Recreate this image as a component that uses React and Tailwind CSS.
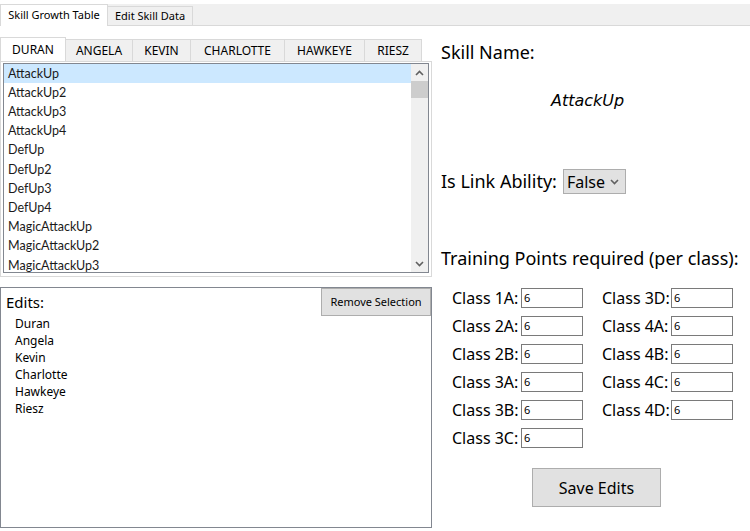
import { useState } from 'react';

const heroes = ['DURAN', 'ANGELA', 'KEVIN', 'CHARLOTTE', 'HAWKEYE', 'RIESZ'];
const heroWidths = ['w-[66px]', 'w-[67px]', 'w-[58px]', 'w-[94px]', 'w-[80px]', 'w-[57px]'];

const skills = [
  'AttackUp',
  'AttackUp2',
  'AttackUp3',
  'AttackUp4',
  'DefUp',
  'DefUp2',
  'DefUp3',
  'DefUp4',
  'MagicAttackUp',
  'MagicAttackUp2',
  'MagicAttackUp3'
];

const edits = ['Duran', 'Angela', 'Kevin', 'Charlotte', 'Hawkeye', 'Riesz'];

const leftClasses = ['1A', '2A', '2B', '3A', '3B', '3C'];
const rightClasses = ['3D', '4A', '4B', '4C', '4D'];

function Chevron({ up }) {
  return (
    <svg width="9" height="6" viewBox="0 0 9 6" aria-hidden="true">
      <path
        d={up ? 'M1 5 L4.5 1.5 L8 5' : 'M1 1 L4.5 4.5 L8 1'}
        fill="none"
        stroke="#606060"
        strokeWidth="1.6"
      />
    </svg>
  );
}

function ClassField({ name }) {
  return (
    <div className="flex h-[28px] items-center">
      <span className="w-[69px] text-[16px] text-black">Class {name}:</span>
      <div className="flex h-[20px] w-[62px] items-center border border-[#7a7a7a] bg-white pl-[2px] text-[11px] text-black">
        6
      </div>
    </div>
  );
}

export default function App() {
  const [selected, setSelected] = useState(0);

  return (
    <div
      className="h-[531px] w-[750px] overflow-hidden bg-white text-black"
      style={{ fontFamily: '"Noto Sans", "Open Sans", sans-serif' }}
    >
      <div className="h-[4px]" />

      <div className="flex h-[22px] items-end border-b border-[#d9d9d9] bg-[#f0f0f0]">
        <div className="-mb-px flex h-[22px] w-[108px] items-center justify-center border border-b-0 border-[#d9d9d9] bg-white text-[11px]">
          Skill Growth Table
        </div>
        <div className="flex h-[19px] w-[85px] items-center justify-center border border-b-0 border-l-0 border-[#d9d9d9] text-[11px]">
          Edit Skill Data
        </div>
      </div>

      <div className="flex">
        <div className="flex w-[432px] flex-col pt-[11px]">
          <div className="flex h-[24px] items-end">
            {heroes.map((hero, index) => (
              <div
                key={hero}
                className={
                  index === 0
                    ? `-mb-px flex h-[25px] ${heroWidths[index]} items-center justify-center border border-b-0 border-[#d9d9d9] bg-white text-[12px]`
                    : `flex h-[22px] ${heroWidths[index]} items-center justify-center border border-b-0 border-l-0 border-[#d9d9d9] bg-[#f0f0f0] text-[12px]`
                }
              >
                {hero}
              </div>
            ))}
          </div>

          <div className="h-[216px] border border-[#d9d9d9] px-[2px] pt-[1px]">
            <div className="flex h-[210px] border border-[#828790] bg-white">
              <ul
                className="flex-1 overflow-hidden text-[12.5px]"
                style={{ fontFamily: 'Lato, "Noto Sans", sans-serif' }}
              >
                {skills.map((skill, index) => (
                  <li
                    key={skill}
                    onClick={() => setSelected(index)}
                    className={`flex h-[19.2px] items-center pl-[4px] pt-[1px] text-[#1a1a1a] ${
                      index === selected ? 'bg-[#cce8ff]' : ''
                    }`}
                  >
                    {skill}
                  </li>
                ))}
              </ul>
              <div className="flex w-[17px] flex-col bg-[#f0f0f0]">
                <div className="flex h-[17px] items-center justify-center">
                  <Chevron up />
                </div>
                <div className="h-[17px] bg-[#cdcdcd]" />
                <div className="flex-1" />
                <div className="flex h-[17px] items-center justify-center">
                  <Chevron />
                </div>
              </div>
            </div>
          </div>

          <div className="mt-[10px] flex h-[241px] flex-col border border-[#828790]">
            <div className="flex items-start justify-between">
              <span className="pl-[5px] pt-[3px] text-[15px]">Edits:</span>
              <button className="h-[28px] w-[110px] border border-[#adadad] bg-[#e1e1e1] text-[11px]">
                Remove Selection
              </button>
            </div>
            <ul className="mt-[-1px] pl-[14px] text-[12px]">
              {edits.map((name) => (
                <li key={name} className="h-[17px] leading-[17px]">
                  {name}
                </li>
              ))}
            </ul>
          </div>
        </div>

        <div className="flex flex-1 flex-col pl-[9px]">
          <div className="pt-[14px] text-[18px] leading-[24px]">Skill Name:</div>
          <div
            className="mt-[25px] pl-[110px] text-[16px] italic"
            style={{ fontFamily: '"DejaVu Sans", sans-serif' }}
          >
            {skills[selected]}
          </div>

          <div className="mt-[55px] flex items-center">
            <span className="text-[18px]">Is Link Ability:</span>
            <div className="ml-[6px] flex h-[25px] w-[63px] items-center justify-between border border-[#adadad] bg-[#e1e1e1] pl-[3px] pr-[6px] text-[16px]">
              False
              <Chevron />
            </div>
          </div>

          <div className="mt-[51px] text-[18px] leading-[24px]">
            Training Points required (per class):
          </div>

          <div className="mt-[14px] flex gap-[19px] pl-[11px]">
            <div className="flex flex-col">
              {leftClasses.map((name) => (
                <ClassField key={name} name={name} />
              ))}
            </div>
            <div className="flex flex-col">
              {rightClasses.map((name) => (
                <ClassField key={name} name={name} />
              ))}
            </div>
          </div>

          <div className="mt-[16px] flex pl-[91px]">
            <button className="h-[39px] w-[129px] border border-[#adadad] bg-[#e1e1e1] text-[16px]">
              Save Edits
            </button>
          </div>
        </div>
      </div>
    </div>
  );
}
